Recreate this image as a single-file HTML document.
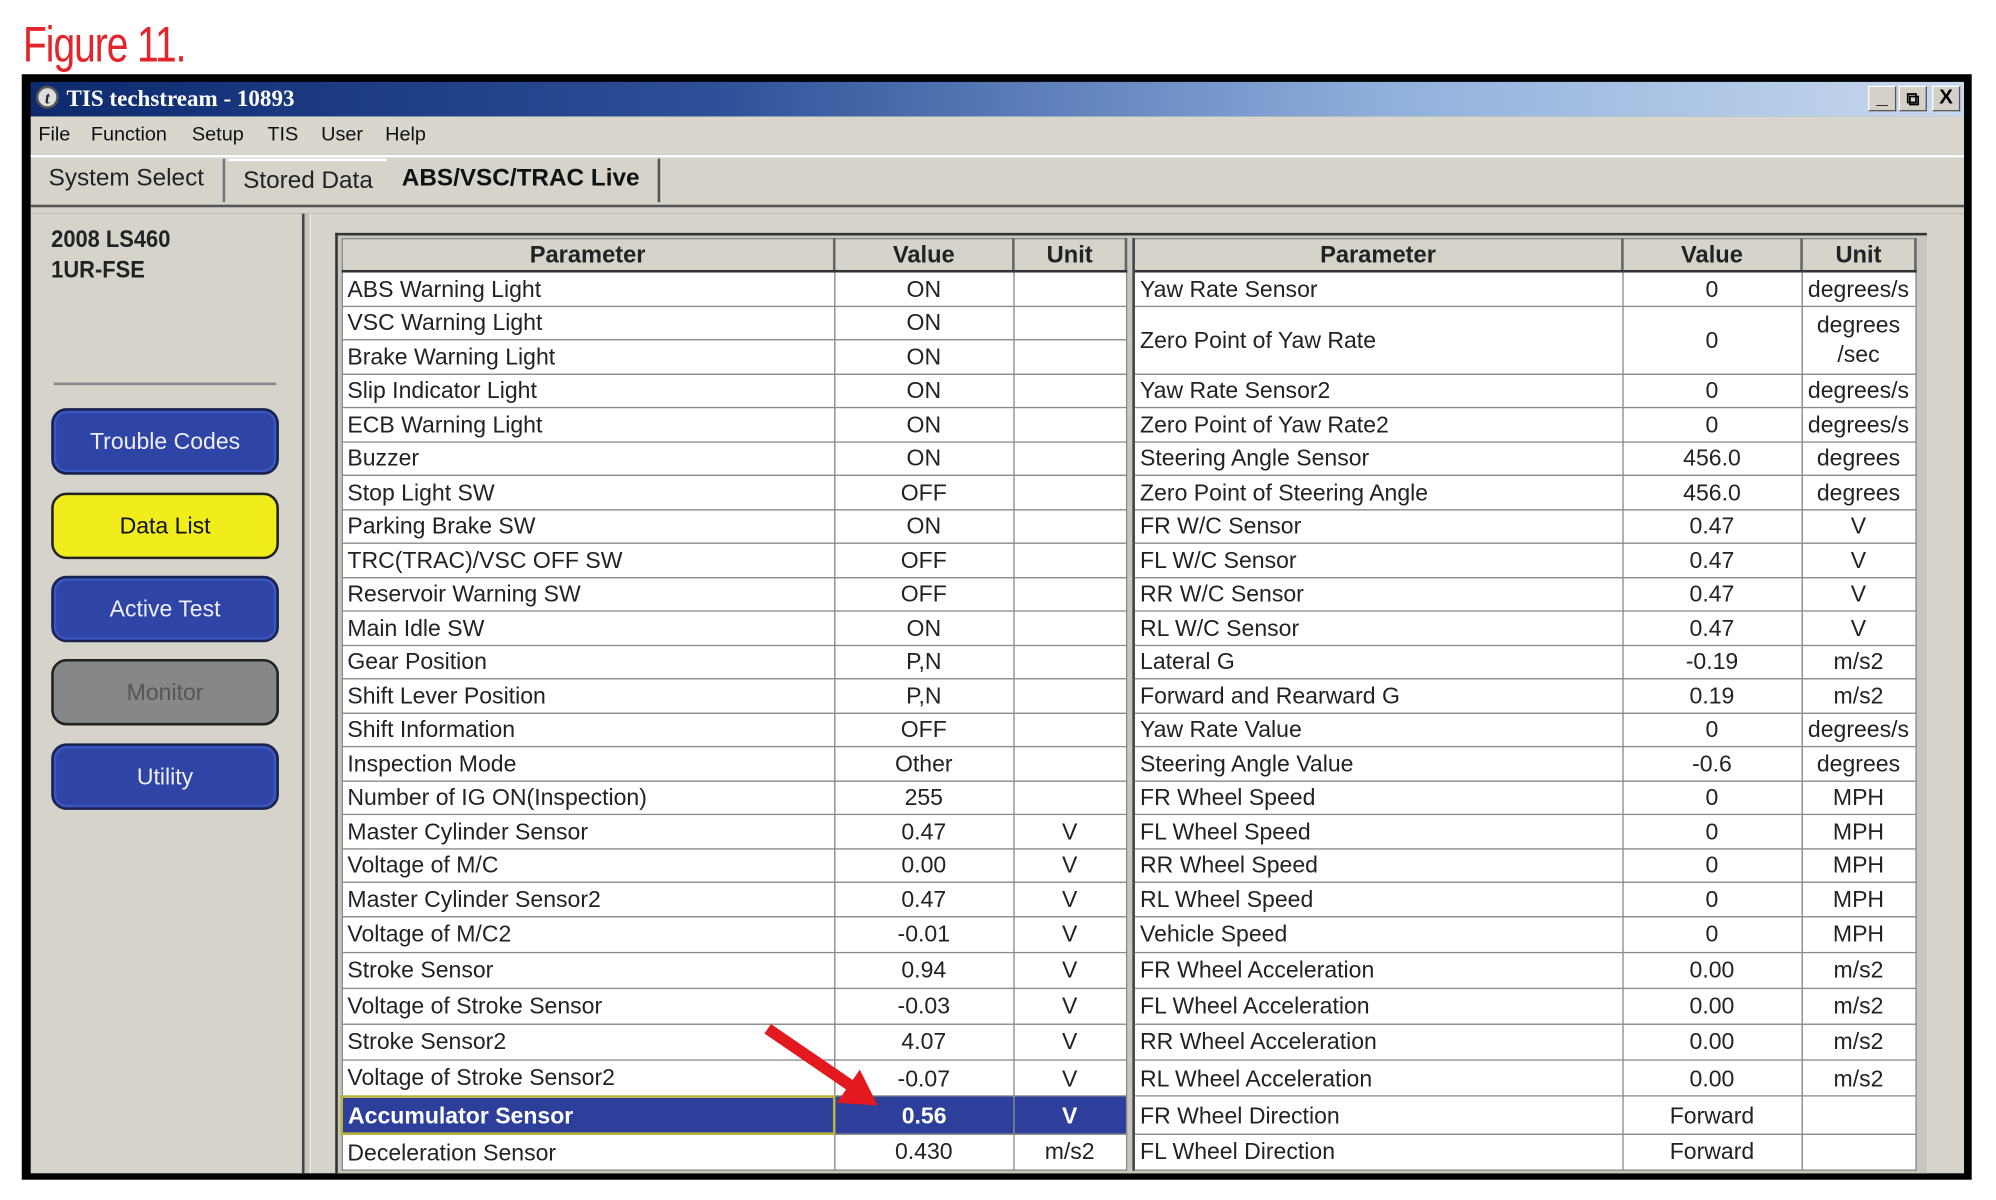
<!DOCTYPE html>
<html><head><meta charset="utf-8"><style>
html,body{margin:0;padding:0;background:#fff;width:1996px;height:1200px;overflow:hidden}
#w{position:absolute;left:0;top:0;width:1560px;height:938px;transform:scale(1.2795);transform-origin:0 0;font-family:"Liberation Sans",Arial,sans-serif}
.a{position:absolute}
#fig{left:18px;top:14px;color:#e3242b;font-size:39px;transform:scaleX(0.78);transform-origin:0 0;letter-spacing:-1px;white-space:nowrap}
#frame{left:17px;top:58px;width:1524px;height:864px;background:#000}
#title{left:24px;top:64px;width:1511px;height:27px;background:linear-gradient(90deg,#0d2a6e 0%,#2d4f98 35%,#8fb0dc 70%,#c9d9ee 100%)}
#title span{position:absolute;left:28px;top:3px;color:#fff;font-family:"Liberation Serif",serif;font-weight:bold;font-size:18px}
#logo{left:28px;top:67px;width:18px;height:18px;border-radius:50%;background:#ddd;border:2px solid #555;box-sizing:border-box;font:bold italic 13px "Liberation Serif",serif;text-align:center;line-height:15px;color:#222}
.wb{top:67px;width:22px;height:20px;background:#d4d0c8;border:1px solid #fff;border-right-color:#555;border-bottom-color:#555;box-sizing:border-box;font:bold 16px "Liberation Sans",sans-serif;text-align:center;line-height:18px;color:#000}
#menu{left:24px;top:91px;width:1511px;height:30px;background:#d9d6cd}
#menu span{position:absolute;top:6px;font-size:15.5px;color:#111}
#tabs{left:24px;top:121px;width:1511px;height:41px;background:#d6d3ca;border-top:2px solid #fff;box-sizing:border-box}
.tab{top:124px;height:34px;font-size:19px;color:#222;line-height:32px;padding-left:12px;box-sizing:border-box}
#sep{left:24px;top:160px;width:1511px;height:7px;background:#d6d3ca;border-top:2px solid #555;box-sizing:border-box}
#left{left:24px;top:167px;width:212px;height:750px;background:#d6d3ca}
#vdiv{left:236px;top:167px;width:7px;height:750px;background:#c8c5bc;border-left:2px solid #444;border-right:1px solid #eee;box-sizing:border-box}
#main{left:243px;top:167px;width:1292px;height:750px;background:#d6d3ca}
.btn{left:40px;width:178px;height:52px;border-radius:12px;border:2px solid #1a2250;box-sizing:border-box;background:#2e45a6;color:#eef;font-size:18px;text-align:center;line-height:48px;box-shadow:inset 0 0 0 2px #3a55c0}
#tbl{left:262px;top:182px;width:1244px;height:735px;background:#c9c6bd;border-top:2px solid #333;border-left:2px solid #333;box-sizing:border-box}
table{position:absolute;left:266px;top:186px;width:1230px;border-collapse:collapse;table-layout:fixed;font-size:18px;color:#222}
td,th{border:1px solid #8a8a8a;padding:0 4px;white-space:nowrap;overflow:hidden;background:#fff;line-height:18px}
th{background:#d6d3ca;font-weight:bold;height:24px;border-bottom:2px solid #333;border-right:2px solid #666;font-size:18.5px}
td.c{text-align:center}
td.g,th.g{background:#c9c6bd;border-top:none;border-bottom:none;padding:0;border-left:1px solid #666;border-right:2px solid #444}
tr.r1 td{height:25.5px}
tr.r2 td{height:27.1px}
tr.hl td.h{background:#2d3f9a;color:#fff;font-weight:bold}
tr.hl td.h1{border:2px solid #b8b43a}
</style></head><body><div id="w">
<div class="a" id="fig">Figure 11.</div>
<div class="a" id="frame"></div>
<div class="a" id="title"><span>TIS techstream - 10893</span></div>
<div class="a" id="logo">t</div>
<div class="a wb" style="left:1460px">_</div>
<div class="a wb" style="left:1484px;font-size:14px">&#x29C9;</div>
<div class="a wb" style="left:1510px">X</div>
<div class="a" id="menu"><span style="left:6px">File</span><span style="left:47px">Function</span><span style="left:126px">Setup</span><span style="left:185px">TIS</span><span style="left:227px">User</span><span style="left:277px">Help</span></div>
<div class="a" id="tabs"></div>
<div class="a tab" style="left:26px;width:150px;border-right:2px solid #777">System Select</div>
<div class="a tab" style="left:178px;width:124px;border-top:2px solid #fff">Stored Data</div>
<div class="a tab" style="left:302px;width:214px;color:#111;border-right:2px solid #555;font-weight:bold;font-size:19px">ABS/VSC/TRAC Live</div>
<div class="a" id="sep"></div>
<div class="a" id="left"></div>
<div class="a" style="left:40px;top:176px;font-size:19px;font-weight:bold;color:#222;line-height:24px;transform:scaleX(.9);transform-origin:0 0">2008 LS460<br>1UR-FSE</div>
<div class="a" style="left:42px;top:299px;width:174px;height:2px;background:#888"></div>
<div class="a btn" style="top:319px">Trouble Codes</div>
<div class="a btn" style="top:385px;background:#f1ec1c;color:#111;border-color:#222;box-shadow:none">Data List</div>
<div class="a btn" style="top:450px">Active Test</div>
<div class="a btn" style="top:515px;background:#878787;color:#555;border-color:#222;box-shadow:none">Monitor</div>
<div class="a btn" style="top:581px">Utility</div>
<div class="a" id="vdiv"></div>
<div class="a" id="main"></div>
<div class="a" id="tbl"></div>
<table>
<colgroup><col style="width:385px"><col style="width:140px"><col style="width:88px"><col style="width:6px"><col style="width:382px"><col style="width:140px"><col style="width:89px"></colgroup>
<tr><th>Parameter</th><th>Value</th><th>Unit</th><th class="g"></th><th>Parameter</th><th>Value</th><th>Unit</th></tr>
<tr class="r1"><td>ABS Warning Light</td><td class="c">ON</td><td class="c"></td><td class="g"></td><td>Yaw Rate Sensor</td><td class="c">0</td><td class="c">degrees/s</td></tr>
<tr class="r1"><td>VSC Warning Light</td><td class="c">ON</td><td class="c"></td><td class="g"></td><td rowspan="2">Zero Point of Yaw Rate</td><td rowspan="2" class="c">0</td><td rowspan="2" class="c" style="line-height:23px">degrees<br>/sec</td></tr>
<tr class="r1"><td>Brake Warning Light</td><td class="c">ON</td><td class="c"></td><td class="g"></td></tr>
<tr class="r1"><td>Slip Indicator Light</td><td class="c">ON</td><td class="c"></td><td class="g"></td><td>Yaw Rate Sensor2</td><td class="c">0</td><td class="c">degrees/s</td></tr>
<tr class="r1"><td>ECB Warning Light</td><td class="c">ON</td><td class="c"></td><td class="g"></td><td>Zero Point of Yaw Rate2</td><td class="c">0</td><td class="c">degrees/s</td></tr>
<tr class="r1"><td>Buzzer</td><td class="c">ON</td><td class="c"></td><td class="g"></td><td>Steering Angle Sensor</td><td class="c">456.0</td><td class="c">degrees</td></tr>
<tr class="r1"><td>Stop Light SW</td><td class="c">OFF</td><td class="c"></td><td class="g"></td><td>Zero Point of Steering Angle</td><td class="c">456.0</td><td class="c">degrees</td></tr>
<tr class="r1"><td>Parking Brake SW</td><td class="c">ON</td><td class="c"></td><td class="g"></td><td>FR W/C Sensor</td><td class="c">0.47</td><td class="c">V</td></tr>
<tr class="r1"><td>TRC(TRAC)/VSC OFF SW</td><td class="c">OFF</td><td class="c"></td><td class="g"></td><td>FL W/C Sensor</td><td class="c">0.47</td><td class="c">V</td></tr>
<tr class="r1"><td>Reservoir Warning SW</td><td class="c">OFF</td><td class="c"></td><td class="g"></td><td>RR W/C Sensor</td><td class="c">0.47</td><td class="c">V</td></tr>
<tr class="r1"><td>Main Idle SW</td><td class="c">ON</td><td class="c"></td><td class="g"></td><td>RL W/C Sensor</td><td class="c">0.47</td><td class="c">V</td></tr>
<tr class="r1"><td>Gear Position</td><td class="c">P,N</td><td class="c"></td><td class="g"></td><td>Lateral G</td><td class="c">-0.19</td><td class="c">m/s2</td></tr>
<tr class="r1"><td>Shift Lever Position</td><td class="c">P,N</td><td class="c"></td><td class="g"></td><td>Forward and Rearward G</td><td class="c">0.19</td><td class="c">m/s2</td></tr>
<tr class="r1"><td>Shift Information</td><td class="c">OFF</td><td class="c"></td><td class="g"></td><td>Yaw Rate Value</td><td class="c">0</td><td class="c">degrees/s</td></tr>
<tr class="r1"><td>Inspection Mode</td><td class="c">Other</td><td class="c"></td><td class="g"></td><td>Steering Angle Value</td><td class="c">-0.6</td><td class="c">degrees</td></tr>
<tr class="r1"><td>Number of IG ON(Inspection)</td><td class="c">255</td><td class="c"></td><td class="g"></td><td>FR Wheel Speed</td><td class="c">0</td><td class="c">MPH</td></tr>
<tr class="r1"><td>Master Cylinder Sensor</td><td class="c">0.47</td><td class="c">V</td><td class="g"></td><td>FL Wheel Speed</td><td class="c">0</td><td class="c">MPH</td></tr>
<tr class="r1"><td>Voltage of M/C</td><td class="c">0.00</td><td class="c">V</td><td class="g"></td><td>RR Wheel Speed</td><td class="c">0</td><td class="c">MPH</td></tr>
<tr class="r1"><td>Master Cylinder Sensor2</td><td class="c">0.47</td><td class="c">V</td><td class="g"></td><td>RL Wheel Speed</td><td class="c">0</td><td class="c">MPH</td></tr>
<tr class="r2"><td>Voltage of M/C2</td><td class="c">-0.01</td><td class="c">V</td><td class="g"></td><td>Vehicle Speed</td><td class="c">0</td><td class="c">MPH</td></tr>
<tr class="r2"><td>Stroke Sensor</td><td class="c">0.94</td><td class="c">V</td><td class="g"></td><td>FR Wheel Acceleration</td><td class="c">0.00</td><td class="c">m/s2</td></tr>
<tr class="r2"><td>Voltage of Stroke Sensor</td><td class="c">-0.03</td><td class="c">V</td><td class="g"></td><td>FL Wheel Acceleration</td><td class="c">0.00</td><td class="c">m/s2</td></tr>
<tr class="r2"><td>Stroke Sensor2</td><td class="c">4.07</td><td class="c">V</td><td class="g"></td><td>RR Wheel Acceleration</td><td class="c">0.00</td><td class="c">m/s2</td></tr>
<tr class="r2"><td>Voltage of Stroke Sensor2</td><td class="c">-0.07</td><td class="c">V</td><td class="g"></td><td>RL Wheel Acceleration</td><td class="c">0.00</td><td class="c">m/s2</td></tr>
<tr class="r2 hl"><td class="h h1">Accumulator Sensor</td><td class="c h">0.56</td><td class="c h">V</td><td class="g"></td><td>FR Wheel Direction</td><td class="c">Forward</td><td class="c"></td></tr>
<tr class="r2"><td>Deceleration Sensor</td><td class="c">0.430</td><td class="c">m/s2</td><td class="g"></td><td>FL Wheel Direction</td><td class="c">Forward</td><td class="c"></td></tr>
</table>
<svg class="a" style="left:580px;top:790px" width="130" height="90" viewBox="0 0 130 90">
<line x1="20" y1="14" x2="90" y2="62" stroke="#e3191f" stroke-width="9" stroke-linecap="butt"/>
<polygon points="106,74 74,72 92,46" fill="#e3191f"/>
</svg>
</div></body></html>
